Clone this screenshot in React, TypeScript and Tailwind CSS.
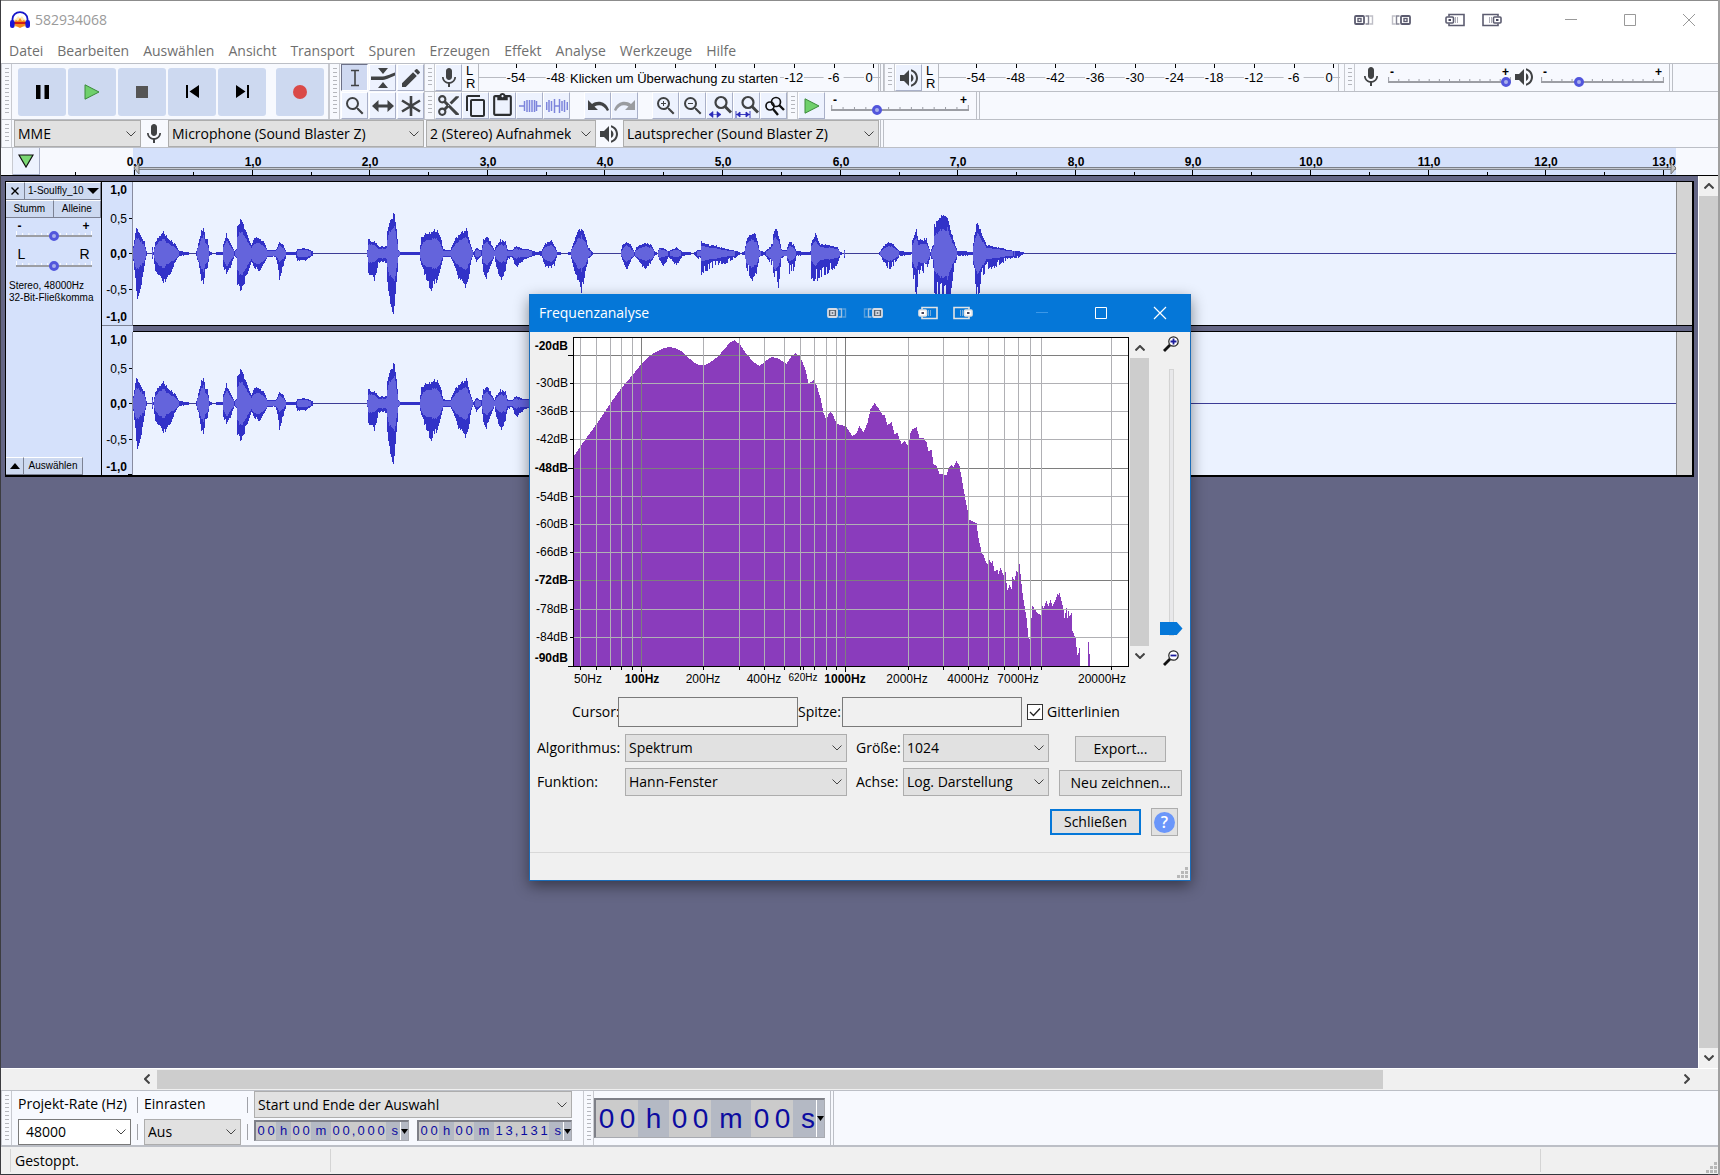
import React from 'react';
import { MdContentCopy, MdContentCut, MdContentPaste, MdEdit, MdMic, MdSearch, MdVolumeUp, MdZoomIn, MdZoomOut } from 'react-icons/md';

/* ---------- data ---------- */

const MENU = ['Datei', 'Bearbeiten', 'Auswählen', 'Ansicht', 'Transport', 'Spuren', 'Erzeugen', 'Effekt', 'Analyse', 'Werkzeuge', 'Hilfe'];

// x, peak above zero, peak below zero (px)
const ENVELOPE: number[][] = [
  [0, 8, 8], [3, 26, 40], [4, 24, 46], [8, 18, 32], [11, 12, 12], [13, 2, 2], [14, 0, 0], [18, 0, 0], [19, 6, 6], [20, 1, 1],
  [22, 12, 20], [27, 20, 25], [30, 22, 30], [34, 17, 25], [38, 13, 20], [42, 9, 8], [46, 2, 2], [55, 1, 1], [56, 0, 0], [62, 0, 0],
  [63, 2, 2], [66, 14, 14], [68, 24, 27], [70, 28, 35], [72, 16, 18], [74, 14, 14], [76, 2, 2], [79, 0, 0], [85, 1, 1], [89, 1, 1],
  [90, 10, 14], [93, 20, 21], [98, 9, 12], [101, 2, 2], [103, 4, 4], [104, 28, 35], [108, 36, 39], [113, 22, 24], [118, 8, 10],
  [121, 18, 14], [126, 16, 18], [131, 11, 11], [134, 3, 3], [142, 3, 3], [144, 6, 10], [146, 12, 27], [150, 8, 12], [153, 1, 1],
  [162, 1, 1], [164, 4, 7], [172, 5, 7], [179, 2, 2], [180, 0, 0], [233, 0, 0], [234, 3, 3], [235, 14, 20], [241, 13, 28], [245, 7, 10],
  [251, 7, 8], [253, 8, 9], [254, 22, 28], [256, 33, 50], [259, 40, 63], [261, 41, 60], [263, 25, 32], [265, 4, 4], [267, 1, 1], [286, 1, 1],
  [288, 16, 12], [294, 21, 30], [297, 23, 38], [304, 24, 27], [307, 17, 15], [310, 4, 3], [317, 3, 3], [321, 14, 12], [325, 18, 25],
  [328, 22, 30], [333, 26, 35], [335, 18, 27], [338, 6, 6], [340, 1, 1], [343, 5, 8], [348, 3, 2], [350, 14, 20], [353, 18, 25],
  [356, 14, 15], [361, 3, 3], [363, 8, 14], [367, 14, 27], [372, 12, 18], [374, 4, 6], [378, 3, 3], [383, 7, 14], [388, 5, 8],
  [395, 4, 4], [403, 1, 1], [408, 2, 2], [412, 10, 14], [418, 13, 14], [421, 8, 12], [424, 1, 1], [431, 0, 0], [437, 1, 1],
  [439, 8, 10], [444, 22, 28], [448, 27, 39], [452, 16, 20], [455, 6, 5], [459, 1, 1], [460, 0, 0], [487, 0, 0], [489, 8, 6],
  [493, 12, 17], [498, 8, 6], [501, 1, 2], [503, 6, 4], [512, 11, 17], [518, 9, 8], [521, 2, 2], [524, 0, 0], [526, 6, 6],
  [530, 5, 14], [535, 2, 3], [543, 6, 12], [549, 1, 2], [555, 1, 1], [560, 0, 0], [564, 3, 4], [567, 3, 6], [568, 12, 22],
  [574, 9, 18], [582, 8, 12], [594, 4, 10], [604, 2, 2], [608, 0, 0], [611, 2, 2], [613, 14, 14], [616, 20, 22], [619, 22, 27], [623, 18, 20],
  [626, 3, 3], [631, 1, 1], [636, 6, 8], [639, 10, 12], [640, 22, 20], [642, 27, 29], [645, 20, 37], [648, 4, 4], [653, 3, 3], [656, 12, 20],
  [660, 9, 18], [663, 2, 2], [675, 1, 1], [677, 2, 2], [678, 12, 26], [682, 20, 29], [687, 9, 27], [695, 9, 20], [704, 6, 12],
  [707, 1, 1], [710, 0, 0], [711, 4, 4], [712, 0, 0], [745, 0, 0], [750, 7, 8], [756, 12, 17], [761, 8, 11], [766, 2, 2],
  [778, 1, 1], [779, 14, 24], [783, 25, 46], [785, 14, 20], [793, 15, 18], [797, 1, 2], [800, 10, 14], [801, 30, 46], [809, 38, 58],
  [814, 40, 60], [817, 26, 46], [820, 14, 20], [824, 2, 2], [831, 2, 2], [839, 1, 1], [841, 20, 26], [844, 34, 57], [848, 22, 30],
  [853, 8, 16], [865, 6, 13], [875, 3, 5], [885, 2, 4], [890, 1, 0], [892, 0, 0],
];

// Spectrum outline inside the plot (556 x 330)
const SPECTRUM: number[][] = [
  [1, 118], [7, 109], [23, 87], [37, 66], [48, 51], [59, 38], [68, 27], [75, 20], [82, 15], [88, 12], [95, 10], [102, 11], [108, 14],
  [113, 19], [120, 25], [125, 28], [131, 28], [137, 25], [144, 20], [150, 13], [156, 6], [161, 3], [167, 8], [173, 17], [180, 25],
  [186, 29], [192, 24], [198, 20], [204, 21], [213, 27], [218, 19], [222, 16], [227, 20], [232, 33], [235, 46], [238, 45], [240, 43],
  [243, 48], [247, 61], [250, 76], [253, 83], [255, 77], [257, 74], [260, 79], [263, 87], [272, 89], [279, 99], [283, 96], [286, 89],
  [290, 95], [294, 86], [297, 72], [301, 66], [305, 71], [309, 78], [311, 78], [314, 88], [318, 85], [321, 97], [324, 96], [328, 107],
  [331, 104], [335, 109], [337, 96], [339, 92], [343, 90], [346, 101], [350, 101], [353, 105], [355, 114], [358, 113], [360, 127],
  [363, 129], [366, 137], [373, 138], [375, 131], [378, 128], [380, 130], [383, 124], [386, 129], [389, 146], [393, 168], [396, 183],
  [403, 186], [405, 201], [408, 215], [410, 218], [412, 224], [415, 229], [416, 223], [418, 226], [419, 224], [421, 234], [424, 233],
  [425, 237], [427, 231], [430, 238], [432, 235], [433, 246], [434, 253], [436, 248], [438, 252], [439, 240], [441, 243], [443, 234],
  [445, 236], [446, 227], [447, 237], [449, 256], [451, 269], [453, 281], [455, 301], [457, 303], [458, 281], [459, 269], [462, 273],
  [464, 276], [467, 278], [469, 269], [470, 271], [473, 264], [475, 269], [477, 263], [479, 269], [482, 263], [484, 257], [485, 258],
  [486, 256], [488, 264], [490, 272], [491, 281], [493, 271], [494, 281], [495, 274], [496, 279], [498, 276], [499, 294], [502, 301],
  [504, 318], [505, 316], [506, 311], [507, 329], [514, 329], [515, 305], [517, 329],
];

const DB_LABELS: [string, number, boolean][] = [
  ['-20dB', 14, true], ['-30dB', 51, false], ['-36dB', 79, false], ['-42dB', 107, false], ['-48dB', 136, true], ['-54dB', 165, false],
  ['-60dB', 192, false], ['-66dB', 220, false], ['-72dB', 248, true], ['-78dB', 277, false], ['-84dB', 305, false], ['-90dB', 326, true],
];
const DB_LINES = [18, 46, 74, 102, 131, 159, 187, 215, 243, 272, 300];
const HZ_LINES = [7, 23, 37, 48, 59, 68, 130, 166, 191, 211, 227, 241, 253, 263, 272, 335, 370, 395, 415, 431, 445, 457, 468, 538];
const HZ_LABELS: [string, number, boolean][] = [
  ['50Hz', 58, false], ['100Hz', 112, true], ['200Hz', 173, false], ['400Hz', 234, false], ['1000Hz', 315, true],
  ['2000Hz', 377, false], ['4000Hz', 438, false], ['7000Hz', 488, false], ['20000Hz', 572, false],
];

function lerp(points: number[][], x: number, k: number) {
  for (let i = 1; i < points.length; i++) {
    if (x <= points[i][0]) {
      const a = points[i - 1];
      const b = points[i];
      return a[k] + ((b[k] - a[k]) * (x - a[0])) / (b[0] - a[0] || 1);
    }
  }
  return 0;
}

function noise(n: number) {
  const v = Math.sin(n * 127.1) * 43758.5453;
  return v - Math.floor(v);
}

function buildWave() {
  let peak = '';
  let rms = '';
  for (let x = 0; x <= 892; x++) {
    const up = lerp(ENVELOPE, x, 1);
    const down = lerp(ENVELOPE, x, 2);
    if (up < 0.5) continue;
    // the louder bursts have a ragged lower edge
    const ragged = x > 560 && noise(x + 77) > 0.7 ? 0.6 : 1;
    const t = Math.round(up * (0.84 + 0.18 * noise(x)));
    const b = Math.round(down * (0.82 + 0.2 * noise(x + 500)) * ragged);
    const r = Math.round(Math.min(up, down) * (0.56 + 0.1 * noise(x + 900)));
    peak += `M${x + 0.5} ${71 - t}V${72 + b}`;
    if (r > 1) rms += `M${x + 0.5} ${71 - r}V${72 + r}`;
  }
  return { peak, rms };
}
const WAVE = buildWave();

const SPECTRUM_PATH = (() => {
  let d = 'M1 329';
  for (let x = 1; x < 518; x++) d += `V${Math.round(lerp(SPECTRUM, x, 1))}H${x + 1}`;
  return d + 'V329Z';
})();

/* ---------- small parts ---------- */

const Gripper = () => (
  <div className="flex w-[11px] shrink-0 items-center justify-center border-x border-[#c8cad0] self-stretch">
    <div className="my-1 w-1 self-stretch bg-[repeating-linear-gradient(to_bottom,#b4b6bc_0_1px,transparent_1px_4px)]" />
  </div>
);

const EndBar = () => <div className="w-1 shrink-0 self-stretch border-x border-[#bcbfc6]" />;

const Chevron = ({ className = '' }: { className?: string }) => (
  <svg viewBox="0 0 10 6" className={`h-[6px] w-[10px] ${className}`} fill="none" stroke="#444">
    <path d="M.5 .5 5 5 9.5 .5" />
  </svg>
);

type SelectProps = { label: string; value: string; className?: string; id?: string };
const Select = ({ label, value, className = '', id }: SelectProps) => (
  <div className={`relative flex shrink-0 items-center border border-[#adadad] bg-[#e1e1e1] ${className}`}>
    <select id={id} aria-label={label} className="h-full w-full appearance-none overflow-hidden bg-transparent pl-[3px] pr-6 leading-5 outline-none">
      <option>{value}</option>
    </select>
    <Chevron className="pointer-events-none absolute right-1" />
  </div>
);

type ToolProps = { label: string; children?: React.ReactNode; active?: boolean };
const Tool = ({ label, children, active }: ToolProps) => (
  <button
    aria-label={label}
    className={`flex h-[27px] w-[27px] shrink-0 items-center justify-center border text-[#404244] ${
      active ? 'border-t-[#6d7187] border-l-[#6d7187] border-r-white border-b-white bg-[#cfd9f1]' : 'border-t-white border-l-white border-r-[#a9b0c8] border-b-[#a9b0c8] bg-[#edf2fe]'
    }`}
  >
    {children}
  </button>
);

const TransportButton = ({ label, children, className = '' }: { label: string; children: React.ReactNode; className?: string }) => (
  <button aria-label={label} className={`flex h-12 w-12 items-center justify-center rounded-[3px] bg-[#cdd9f0] ${className}`}>
    {children}
  </button>
);

type SliderProps = { label: string; value: number; className: string; ends?: string[]; endClass?: string; tick?: string };
const Slider = ({ label, value, className, ends = ['-', '+'], endClass = 'text-xs leading-2 font-bold', tick = '#9a9ca4' }: SliderProps) => (
  <div className={`flex shrink-0 flex-col font-['Liberation_Sans',sans-serif] ${className}`}>
    <div className={`flex justify-between px-[2px] ${endClass}`}>
      <span>{ends[0]}</span>
      <span>{ends[1]}</span>
    </div>
    <div className="relative h-3">
      <svg className="absolute inset-x-0 top-[1px] h-[5px] w-full" preserveAspectRatio="none" viewBox="0 0 100 5">
        {Array.from({ length: 13 }, (_, i) => (
          <path key={i} d={`M${0.5 + i * 8.25} ${i % 12 ? 2 : 0}V5`} stroke={tick} vectorEffect="non-scaling-stroke" />
        ))}
      </svg>
      <input
        type="range"
        aria-label={label}
        defaultValue={value}
        className="absolute inset-0 m-0 h-3 w-full appearance-none bg-transparent [&::-webkit-slider-runnable-track]:h-[2px] [&::-webkit-slider-runnable-track]:bg-[#9c9ea4] [&::-webkit-slider-thumb]:-mt-1 [&::-webkit-slider-thumb]:h-[10px] [&::-webkit-slider-thumb]:w-[10px] [&::-webkit-slider-thumb]:appearance-none [&::-webkit-slider-thumb]:rounded-full [&::-webkit-slider-thumb]:border-[3px] [&::-webkit-slider-thumb]:border-[#5256dc] [&::-webkit-slider-thumb]:bg-[#a9b0ec]"
      />
    </div>
  </div>
);

// Multi-monitor helper glyphs that sit in the title bars
const MoveGlyph = ({ flip, tone, fill }: { flip?: boolean; tone: string; fill: string }) => (
  <svg viewBox="0 0 20 12" className={`h-3 w-5 ${flip ? '-scale-x-100' : ''}`} fill="none" stroke={tone}>
    <path d="M15.500 2h3v8h-3" opacity=".4" strokeWidth="1.400" />
    <path d="M11.500 2h3v8h-3" opacity=".75" strokeWidth="1.400" />
    <rect x="1" y="2" width="9" height="8" rx="1" strokeWidth="1.800" fill={fill} />
    <rect x="4" y="4.500" width="3" height="3" strokeWidth="1.400" />
  </svg>
);
const DockGlyph = ({ flip, tone, fill }: { flip?: boolean; tone: string; fill: string }) => (
  <svg viewBox="0 0 20 14" className={`h-[14px] w-5 ${flip ? '-scale-x-100' : ''}`} fill="none" stroke={tone}>
    <path d="M4 3.500V1.500h15v11H4v-2" strokeWidth="1.600" />
    <path d="M10.500 4v6M12.500 4v6" opacity=".5" />
    <rect x="1" y="4" width="7.500" height="6" rx="1" strokeWidth="1.600" fill={fill} />
    <path d="M3.500 7h2.500" strokeWidth="2" stroke="#44445c" />
  </svg>
);

const Triangle = ({ className = '' }: { className?: string }) => (
  <svg viewBox="0 0 16 16" className={className}>
    <path d="M1 .8 15 8 1 15.200z" fill="#6fd06c" stroke="#3c8a3c" />
  </svg>
);

const Meter = ({ start, hint }: { start: string; hint?: boolean }) => {
  const marks = ['-54', '-48', '-42', '-36', '-30', '-24', '-18', '-12', '-6', '0'];
  return (
    <button aria-label={start} className="flex h-[27px] shrink-0 text-left font-['Liberation_Sans',sans-serif]">
      <span className="flex w-3 flex-col text-[13px] leading-[13px]">
        <span>L</span>
        <span>R</span>
      </span>
      <svg width="402" height="27" className="text-[13px]">
        <path d="M.5 0V27M0 13.500H402M400.500 0V27" stroke="#b9bbc2" fill="none" />
        {marks.map((m, i) => {
          const x = 38 + i * 39.700;
          const hidden = hint && i > 1 && i < 7;
          return (
            <g key={m}>
              <path d={`M${Math.round(x) + 0.5} 0V4`} stroke="#000" />
              {!hidden && <rect x={i === 9 ? 386 : x - 10} y="6" width={i === 9 ? 9 : 20} height="14" fill="#f7f9fe" />}
              {!hidden && (
                <text x={i === 9 ? 391 : x} y="18" textAnchor="middle">
                  {m}
                </text>
              )}
            </g>
          );
        })}
        {hint && <rect x="90" y="5" width="212" height="18" fill="#f7f9fe" />}
        {hint && (
          <text x="92" y="19">
            Klicken um Überwachung zu starten
          </text>
        )}
      </svg>
    </button>
  );
};

/* ---------- window chrome ---------- */

const TitleBar = () => (
  <header className="bg-white text-[#9a9a9a]">
    <div className="h-px bg-[#8c8c8c]" />
    <div className="flex h-[37px] items-center pl-[9px] pr-[22px]">
      <svg viewBox="0 0 20 18" className="h-[18px] w-5">
        <path d="M4 16V9l3-2 1-2 2 2 2-2 2 3 2 1v7z" fill="#ffe9b0" />
        <path d="M4 11l2-2 2 1 2-3 2 3 2-1 2 2v3l-2 1-2 1-2 1-2-1-2-1-2-1z" fill="#f58a1e" />
        <path d="M4 12h12" stroke="#d01c1c" strokeWidth="2" />
        <path d="M2.500 11V8a7.500 6.800 0 0 1 15 0v3" fill="none" stroke="#1616c8" strokeWidth="1.800" />
        <rect x="0" y="9" width="4.600" height="8" rx="2.200" fill="#1616d8" />
        <rect x="15.400" y="9" width="4.600" height="8" rx="2.200" fill="#1616d8" />
      </svg>
      <span className="ml-[5px] text-sm">582934068</span>
      <div className="ml-auto flex items-center">
        <MoveGlyph tone="#5c5c70" fill="#fff" />
        <span className="w-[17px]" />
        <MoveGlyph flip tone="#5c5c70" fill="#fff" />
        <span className="w-[34px]" />
        <DockGlyph tone="#5c5c70" fill="#fff" />
        <span className="w-[17px]" />
        <DockGlyph flip tone="#5c5c70" fill="#fff" />
      </div>
      <div className="ml-[62px] flex items-center gap-[45px]">
        <button aria-label="Minimieren" className="h-[14px] w-[14px]">
          <svg viewBox="0 0 14 14" stroke="#999"><path d="M1 6.500h12" /></svg>
        </button>
        <button aria-label="Maximieren" className="h-[14px] w-[14px]">
          <svg viewBox="0 0 14 14" fill="none" stroke="#999"><path d="M1.500 1.500h11v11h-11z" /></svg>
        </button>
        <button aria-label="Schließen" className="h-[14px] w-[14px]">
          <svg viewBox="0 0 14 14" stroke="#999"><path d="M1 1l12 12M13 1L1 13" /></svg>
        </button>
      </div>
    </div>
    <nav className="flex h-[25px] items-center gap-[14px] pl-2 text-sm text-[#6f6f6f]">
      {MENU.map((item) => (
        <button key={item}>{item}</button>
      ))}
    </nav>
  </header>
);

const TransportBar = () => (
  <div className="flex items-center border-r border-[#c8cad0] pr-1">
    <Gripper />
    <div className="ml-[6px] flex gap-0.5">
      <TransportButton label="Pause">
        <svg viewBox="0 0 13 14" className="h-[14px] w-[13px]"><path d="M0 0h4.500v14H0zM8.500 0H13v14H8.500z" /></svg>
      </TransportButton>
      <TransportButton label="Wiedergabe"><Triangle className="h-4 w-4" /></TransportButton>
      <TransportButton label="Stopp"><span className="h-3 w-3 bg-[#555]" /></TransportButton>
      <TransportButton label="Anfang">
        <svg viewBox="0 0 13 13" className="h-[13px] w-[13px]"><path d="M0 0h2v13H0zM13 0v13L3.500 6.500z" /></svg>
      </TransportButton>
      <TransportButton label="Ende">
        <svg viewBox="0 0 13 13" className="h-[13px] w-[13px]"><path d="M11 0h2v13h-2zM0 0v13l9.500-6.500z" /></svg>
      </TransportButton>
      <TransportButton label="Aufnahme" className="ml-2"><span className="h-[14px] w-[14px] rounded-full bg-[#da4a48]" /></TransportButton>
    </div>
  </div>
);

const ToolsBar = () => (
  <div className="flex">
    <Gripper />
    <div className="ml-px grid grid-cols-3 gap-px">
      <Tool label="Auswahlwerkzeug" active>
        <svg viewBox="0 0 16 18" className="h-[18px] w-4" fill="none" stroke="#404244" strokeWidth="1.600"><path d="M4 1.500h8M4 16.500h8M8 1.500v15" /></svg>
      </Tool>
      <Tool label="Hüllkurvenwerkzeug">
        <svg viewBox="0 0 24 20" className="h-5 w-6 shrink-0" fill="#404244"><path d="M7 0h10l-5 6zM7 20h10l-5-6zM0 8.500h10c5 0 8-2 14-4v3c-6 2.500-9 4.500-14 4.500H0z" /></svg>
      </Tool>
      <Tool label="Zeichenwerkzeug"><MdEdit size={24} className="shrink-0" /></Tool>
      <Tool label="Zoomwerkzeug"><MdSearch size={24} className="shrink-0" /></Tool>
      <Tool label="Verschiebewerkzeug">
        <svg viewBox="0 0 22 14" className="h-[14px] w-[22px] shrink-0" fill="#404244"><path d="M0 7l6.500-6v4.600h9V1L22 7l-6.500 6V8.400h-9V13z" /></svg>
      </Tool>
      <Tool label="Multiwerkzeug">
        <svg viewBox="0 0 20 20" className="h-5 w-5" stroke="#404244" strokeWidth="2.600"><path d="M10 0v20M1 4.500l18 11M19 4.500l-18 11" /></svg>
      </Tool>
    </div>
  </div>
);

const Lens = ({ children }: { children?: React.ReactNode }) => (
  <svg viewBox="0 0 24 24" className="h-6 w-6 shrink-0" fill="none" stroke="#404244" strokeWidth="2.200">
    <circle cx="13" cy="8.500" r="5.500" />
    <path d="M17 12.500l6 6" strokeWidth="3" />
    {children}
  </svg>
);

const EditBar = () => (
  <div className="flex h-[27px]">
    <Gripper />
    <Tool label="Ausschneiden"><MdContentCut size={25} className="shrink-0" /></Tool>
    <Tool label="Kopieren"><MdContentCopy size={24} className="shrink-0 text-[#2c2e30]" /></Tool>
    <Tool label="Einfügen"><MdContentPaste size={25} className="shrink-0 text-[#2c2e30]" /></Tool>
    <Tool label="Trimmen">
      <svg viewBox="0 0 22 16" className="h-4 w-[22px] shrink-0" fill="none" stroke="#7c84dc"><path d="M0 8h5M17 8h5" strokeWidth="1.500" /><path d="M5.500 3v10M8 2v12M10.500 2v12M13 2v12M15.500 2v12M17.500 3v10" strokeWidth="1.500" /></svg>
    </Tool>
    <Tool label="Stille">
      <svg viewBox="0 0 22 16" className="h-4 w-[22px] shrink-0" fill="none" stroke="#7c84dc" strokeWidth="1.500"><path d="M.7 4v8M3 2v12M5.500 3v10M8.500 1v14M8.500 8h5M13.500 1v14M16 3v10M18.500 2v12M21.300 4v8" /></svg>
    </Tool>
    <div className="w-[14px]" />
    <Tool label="Rückgängig">
      <svg viewBox="0 0 22 14" className="h-[14px] w-[22px] shrink-0"><path d="M1 1v10h10L7.500 7.500C12 5 17 6 20 12l2-1C19 2 10 1 5 5z" fill="#404244" /></svg>
    </Tool>
    <Tool label="Wiederherstellen">
      <svg viewBox="0 0 22 14" className="h-[14px] w-[22px] shrink-0 -scale-x-100"><path d="M1 1v10h10L7.500 7.500C12 5 17 6 20 12l2-1C19 2 10 1 5 5z" fill="#9a9ca0" /></svg>
    </Tool>
    <div className="w-[14px]" />
    <Tool label="Vergrößern"><MdZoomIn size={24} className="shrink-0" /></Tool>
    <Tool label="Verkleinern"><MdZoomOut size={24} className="shrink-0" /></Tool>
    <Tool label="Auswahl einpassen">
      <Lens><path d="M1 20.500h12M5 17.500l-4 3 4 3zM9 17.500l4 3-4 3z" stroke="#2a2ab8" strokeWidth=".6" fill="#2a2ab8" /></Lens>
    </Tool>
    <Tool label="Projekt einpassen">
      <Lens><path d="M1 17v7M15 17v7M1 20.500h14M5 18l-3 2.500 3 2.500zM11 18l3 2.500-3 2.500z" stroke="#2a2ab8" strokeWidth=".9" fill="#2a2ab8" /></Lens>
    </Tool>
    <Tool label="Zoom umschalten">
      <svg viewBox="0 0 24 24" className="h-6 w-6 shrink-0" fill="none" stroke="#111" strokeWidth="1.700"><circle cx="14" cy="8" r="4.500" /><circle cx="8" cy="12" r="4" /><path d="M17 11l5 5M11 15l5 6" strokeWidth="2.400" /></svg>
    </Tool>
    <Gripper />
    <Tool label="Wiedergabe mit Geschwindigkeit"><Triangle className="h-4 w-4" /></Tool>
    <Slider label="Geschwindigkeit" value={32} className="ml-[6px] mt-[4px] w-[138px]" />
    <div className="w-[7px]" />
    <EndBar />
  </div>
);

const MeterBar = () => (
  <div className="flex h-[27px]">
    <Gripper />
    <Tool label="Aufnahmepegel"><MdMic size={24} className="shrink-0" /></Tool>
    <div className="w-1" />
    <Meter start="Überwachung starten" hint />
    <EndBar />
    <Gripper />
    <Tool label="Wiedergabepegel"><MdVolumeUp size={24} className="shrink-0" /></Tool>
    <div className="w-1" />
    <Meter start="Wiedergabepegel anzeigen" />
    <div className="w-1" />
    <Gripper />
    <MdMic size={24} className="mt-px ml-1 shrink-0 text-[#404244]" />
    <Slider label="Aufnahmelautstärke" value={100} className="ml-[5px] mt-[4px] w-[123px]" />
    <MdVolumeUp size={24} className="ml-px mt-px shrink-0 text-[#404244]" />
    <Slider label="Wiedergabelautstärke" value={29} className="ml-[5px] mt-[4px] w-[123px]" />
    <div className="w-[5px]" />
    <EndBar />
  </div>
);

const DeviceBar = () => (
  <div className="flex h-7 items-center border-b border-[#bcbfc6] text-sm">
    <Gripper />
    <Select label="Audio-Host" value="MME" className="ml-[2px] h-[27px] w-[127px]" />
    <MdMic size={24} className="mx-px shrink-0 text-[#404244]" />
    <Select label="Aufnahmegerät" value="Microphone (Sound Blaster Z)" className="ml-px h-[27px] w-[256px]" />
    <Select label="Aufnahmekanäle" value="2 (Stereo) Aufnahmekanäle" className="ml-[2px] h-[27px] w-[170px]" />
    <MdVolumeUp size={24} className="mx-px shrink-0 text-[#404244]" />
    <Select label="Wiedergabegerät" value="Lautsprecher (Sound Blaster Z)" className="mx-px h-[27px] w-[256px]" />
    <EndBar />
  </div>
);

const Ruler = () => (
  <div className="flex h-7 border-b border-black bg-[#f7f9fe]">
    <div className="w-[12px] border-r border-[#c8cad0]" />
    <button aria-label="Abspielbereich anheften" className="flex w-[27px] items-center justify-center border-r border-b border-[#a9b0c8] bg-[#edf2fe]">
      <svg viewBox="0 0 16 14" className="h-[14px] w-4"><path d="M1 1h14L8 13z" fill="#7ad873" stroke="#111" strokeWidth="1.200" /></svg>
    </button>
    <svg height="27" className="min-w-0 flex-1 font-['Liberation_Sans',sans-serif] text-xs font-bold">
      <rect x="93" width="1543" height="27" fill="#d5e1fb" />
      <path d="M94 19.500H1636M94 21.500H1636" stroke="#7c8088" />
      <path d="M94 20.500H1636" stroke="#c4c8d0" />
      <path d="M35.500 24v3" stroke="#000" />
      {Array.from({ length: 14 }, (_, i) => {
        const x = Math.round(94 + i * 117.600);
        return (
          <g key={i}>
            <path d={`M${x + 0.5} 22v5${i < 13 ? `M${x + 59.500} 24v3` : ''}`} stroke="#000" />
            <text x={x + 1} y="18" textAnchor="middle">{i},0</text>
          </g>
        );
      })}
      <path d="M99 15l-5 5 5 6zM1631 15l5 5-5 6z" fill="#c0c0c0" stroke="#777" />
    </svg>
  </div>
);

/* ---------- track ---------- */

const Channel = ({ floor }: { floor?: boolean }) => (
  <div className="flex h-[143px]">
    <svg width="31" height="143" className="shrink-0 bg-[#d5e1fb] font-['Liberation_Sans',sans-serif] text-xs">
      <text x="25" y="12" textAnchor="end" className="font-bold">1,0</text>
      <text x="25" y="41" textAnchor="end">0,5</text>
      <text x="25" y="76" textAnchor="end" className="font-bold">0,0</text>
      <text x="25" y="112" textAnchor="end">-0,5</text>
      <text x="25" y="139" textAnchor="end" className="font-bold">-1,0</text>
      <path d={`M27 36.500h4M27 71.500h4M27 107.500h4${floor ? 'M26 142.500h5' : ''}`} stroke="#000" />
      <path d="M30.500 0v143" stroke="#888ca0" />
    </svg>
    <svg height="143" className="min-w-0 flex-1 bg-[#ebf2ff]">
      <path d="M0 71.500H1900" stroke="#3c3c96" />
      <path d={WAVE.peak} stroke="#3232c8" />
      <path d={WAVE.rms} stroke="#6464dc" />
    </svg>
    <div className="w-4 border-l border-[#8c8c8c] bg-[#d4d4d4]" />
  </div>
);

const panelButton = 'border-r border-b border-[#7c8294] bg-[#cdd9f0] border-t border-t-white text-center';

const TrackPanel = () => (
  <div className="flex w-[96px] shrink-0 flex-col border-r border-black bg-[#d5e1fb] font-['Liberation_Sans',sans-serif] text-[10px] leading-4">
    <div className="flex h-[18px]">
      <button aria-label="Spur schließen" className={`flex w-[19px] items-center justify-center ${panelButton}`}>
        <svg viewBox="0 0 8 8" className="h-2 w-2" stroke="#000" strokeWidth="1.400"><path d="M.5 .5l7 7M7.500 .5l-7 7" /></svg>
      </button>
      <button className={`flex flex-1 items-center justify-between pl-[3px] pr-px ${panelButton}`}>
        1-Soulfly_10
        <svg viewBox="0 0 12 6" className="h-[6px] w-3"><path d="M0 0h12L6 6z" /></svg>
      </button>
    </div>
    <div className="flex h-[18px]">
      <button className={`flex-1 ${panelButton}`}>Stumm</button>
      <button className={`flex-1 ${panelButton}`}>Alleine</button>
    </div>
    <Slider label="Lautstärke" value={50} tick="#fff" className="mx-auto mt-1 w-[76px]" />
    <Slider label="Balance" value={50} tick="#fff" ends={['L', 'R']} endClass="text-[14px] leading-3" className="mx-auto mt-1.5 w-[76px]" />
    <p className="mt-2 pl-[3px] leading-3 whitespace-nowrap">
      Stereo, 48000Hz
      <br />
      32-Bit-Fließkomma
    </p>
    <div className="mt-auto flex h-[18px]">
      <button aria-label="Spur einklappen" className={`flex w-[18px] items-center justify-center ${panelButton}`}>
        <svg viewBox="0 0 10 6" className="h-[6px] w-[10px]"><path d="M0 6h10L5 0z" /></svg>
      </button>
      <button className={`w-[59px] whitespace-nowrap ${panelButton}`}>Auswählen</button>
    </div>
  </div>
);

const TrackArea = () => (
  <main className="flex min-h-0 flex-1 bg-[#646685]">
    <div className="min-w-0 flex-1 px-1 pt-[5px]">
      <div className="flex border-t border-r-2 border-b-2 border-l border-black">
        <TrackPanel />
        <div className="min-w-0 flex-1">
          <Channel />
          <div className="flex h-[7px]">
            <div className="w-[31px] border-t border-[#7c8294] bg-[#d5e1fb]" />
            <div className="flex-1 border-y border-black" />
          </div>
          <Channel floor />
        </div>
      </div>
    </div>
    <div className="flex w-5 flex-col items-center border-l border-white bg-[#f0f0f0]">
      <Chevron className="my-[7px] rotate-180 stroke-2" />
      <div className="w-full flex-1 bg-[#cdcdcd]" />
      <Chevron className="my-[7px] stroke-2" />
    </div>
  </main>
);

/* ---------- bottom ---------- */

type Cell = [string, string];
const TimeControl = ({ label, cells, className }: { label: string; cells: Cell[]; className: string }) => (
  <div
    role="group"
    aria-label={label}
    className={`flex items-stretch border-t-2 border-l-2 border-[#7e8088] border-r border-b border-r-[#a8aab0] border-b-[#a8aab0] bg-[#b4b9c4] font-['Liberation_Sans',sans-serif] text-[#0c0ca0] ${className}`}
  >
    {cells.map(([ch, width], i) => (
      <span key={i} className={`flex shrink-0 items-center ${ch === 's' ? 'justify-end' : 'justify-center'} ${width} ${/[0-9,]/.test(ch) ? 'bg-[#cbcbcb]' : ''}`}>
        {ch}
      </span>
    ))}
    <button aria-label="Format wählen" className="ml-auto flex w-2 items-center justify-center border-l border-white text-black">
      <svg viewBox="0 0 7 5" className="h-[5px] w-[7px]"><path d="M0 0h7L3.500 5z" /></svg>
    </button>
  </div>
);

const small = (text: string): Cell[] =>
  text.split('').map((ch) => [ch, ch === 'h' ? 'w-[15px]' : ch === 'm' ? 'w-5' : ch === ',' ? 'w-[5px]' : ch === 's' ? 'w-3' : 'w-[10px]']);
const big = (text: string): Cell[] =>
  text.split('').map((ch) => [ch, ch === 'h' ? 'w-[31px]' : ch === 'm' ? 'w-10' : ch === 's' ? 'w-[22px]' : 'w-[21px]']);

const Dividers = () => (
  <div className="mx-[6px] flex flex-col justify-around">
    <span className="h-4 w-px bg-[#a0a2a8]" />
    <span className="h-4 w-px bg-[#a0a2a8]" />
  </div>
);

const BottomBar = () => (
  <div className="flex h-[57px] border-t border-b-2 border-[#bcbfc6] bg-[#f7f9fe] text-sm">
    <Gripper />
    <div className="ml-[6px] flex w-[113px] flex-col justify-between">
      <label htmlFor="rate" className="leading-[26px] whitespace-nowrap">Projekt-Rate (Hz)</label>
      <Select id="rate" label="Projekt-Rate" value="48000" className="h-[26px] border-[#7a7a7a]! bg-white! pl-1" />
    </div>
    <Dividers />
    <div className="flex w-[97px] flex-col justify-between">
      <label htmlFor="snap" className="leading-[26px]">Einrasten</label>
      <Select id="snap" label="Einrasten" value="Aus" className="h-[26px]" />
    </div>
    <Dividers />
    <div className="w-[318px]">
      <Select label="Auswahlmodus" value="Start und Ende der Auswahl" className="h-[27px]" />
      <div className="mt-[2px] flex justify-between text-[13px]">
        <TimeControl label="Start" cells={small('00h00m00,000s')} className="h-[21px] w-[155px]" />
        <TimeControl label="Ende" cells={small('00h00m13,131s')} className="h-[21px] w-[155px]" />
      </div>
    </div>
    <div className="w-[11px]" />
    <Gripper />
    <TimeControl label="Position" cells={big('00h00m00s')} className="mt-[7px] h-10 w-[231px] text-[28px]" />
    <div className="w-[5px]" />
    <EndBar />
  </div>
);

const SizeGrip = () => (
  <svg viewBox="0 0 11 11" className="h-[11px] w-[11px]" fill="#b8b8b8">
    <path d="M8 0h3v3H8zM4 4h3v3H4zM8 4h3v3H8zM0 8h3v3H0zM4 8h3v3H4zM8 8h3v3H8z" />
  </svg>
);

const StatusBar = () => (
  <footer className="flex h-7 border-b border-[#33363c] bg-[#f0f0f0] text-sm">
    <div className="my-0.5 w-[10px] border-r border-[#d4d4d4]" />
    <div className="my-0.5 w-[320px] border-r border-[#d4d4d4] pl-1 leading-6">Gestoppt.</div>
    <div className="my-0.5 flex-1 border-r border-[#d4d4d4]" />
    <div className="flex w-[177px] items-end justify-end p-px"><SizeGrip /></div>
  </footer>
);

const HScroll = () => (
  <div className="flex h-[22px] items-center border-t border-white bg-[#f0f0f0] pb-px">
    <div className="flex w-[156px] justify-end pr-[5px]"><Chevron className="rotate-90 stroke-2" /></div>
    <div className="mr-[299px] h-[19px] flex-1 bg-[#cdcdcd]" />
    <div className="w-9"><Chevron className="-rotate-90 stroke-2" /></div>
  </div>
);

/* ---------- frequency analysis dialog ---------- */

const SpectrumChart = () => (
  <svg width="599" height="365" className="shrink-0 font-['Liberation_Sans',sans-serif] text-xs">
    {DB_LABELS.map(([t, y, bold]) => (
      <text key={t} x="38" y={y + 4} textAnchor="end" className={bold ? 'font-bold' : ''}>{t}</text>
    ))}
    {HZ_LABELS.map(([t, x, bold]) => (
      <text key={t} x={x} y="351" textAnchor="middle" className={bold ? 'font-bold' : ''}>{t}</text>
    ))}
    <text x="273" y="349" textAnchor="middle" className="text-[10px]">620Hz</text>
    <g transform="translate(43 5)">
      <rect x=".5" y=".5" width="555" height="329" fill="#fff" />
      <path d={SPECTRUM_PATH} fill="#8a3cbc" />
      {DB_LINES.map((y) => (
        <path key={y} d={`M1 ${y + 0.5}H555`} stroke={[18, 131, 243].includes(y) ? '#7e7e7e' : '#b0b0b4'} />
      ))}
      {HZ_LINES.map((x) => (
        <path key={x} d={`M${x + 0.5} 1V329`} stroke={[68, 272].includes(x) ? '#7e7e7e' : '#b0b0b4'} />
      ))}
      {DB_LINES.map((y) => <path key={y} d={`M${[18, 131, 243].includes(y) ? -5 : -3} ${y + 0.5}H0`} stroke="#000" />)}
      {[...HZ_LINES, 230].map((x) => <path key={x} d={`M${x + 0.5} 330v${[68, 272].includes(x) ? 5 : 3}`} stroke="#000" />)}
      <path d="M-5 329.500H0" stroke="#000" />
      <rect x=".5" y=".5" width="555" height="329" fill="none" stroke="#000" />
    </g>
  </svg>
);

const ZoomGlyph = ({ plus }: { plus?: boolean }) => (
  <svg viewBox="0 0 16 16" className="h-4 w-4" fill="none">
    <path d="M1 15l6-6" stroke="#111" strokeWidth="2.800" />
    <circle cx="10.500" cy="5.500" r="4.700" fill="#fff" stroke="#222" strokeWidth="1.200" />
    <path d={plus ? 'M7.500 5.500h6M10.500 2.500v6' : 'M7.500 5.500h6'} stroke="#1c1c9c" strokeWidth="1.800" />
  </svg>
);

const FrequencyDialog = () => (
  <section role="dialog" aria-label="Frequenzanalyse" className="absolute top-[294px] left-[528px] w-[662px] border border-t-0 border-[#1a6cb8] bg-[#f0f0f0] text-sm shadow-[0_5px_14px_rgba(0,0,0,0.45)]">
    <div className="flex h-[38px] items-center bg-[#0577d8] pr-[23px] pl-[9px] text-white">
      <h2>Frequenzanalyse</h2>
      <div className="ml-auto flex items-center">
        <MoveGlyph tone="#d8dce4" fill="#55606c" />
        <span className="w-4" />
        <MoveGlyph flip tone="#d8dce4" fill="#55606c" />
        <span className="w-[35px]" />
        <DockGlyph tone="#e4e4e4" fill="#fff" />
        <span className="w-[15px]" />
        <DockGlyph flip tone="#e4e4e4" fill="#fff" />
      </div>
      <div className="ml-[62px] flex items-center gap-[45px]">
        <button aria-label="Minimieren" disabled className="h-[14px] w-[14px]">
          <svg viewBox="0 0 14 14" stroke="#3c98e8"><path d="M1 6.500h12" /></svg>
        </button>
        <button aria-label="Maximieren" className="h-[14px] w-[14px]">
          <svg viewBox="0 0 14 14" fill="none" stroke="#fff"><path d="M1.500 1.500h11v11h-11z" /></svg>
        </button>
        <button aria-label="Dialog schließen" className="h-[14px] w-[14px]">
          <svg viewBox="0 0 14 14" stroke="#fff" strokeWidth="1.200"><path d="M1 1l12 12M13 1L1 13" /></svg>
        </button>
      </div>
    </div>

    <div className="flex">
      <SpectrumChart />
      <div className="mt-[6px] ml-px flex h-[328px] w-[19px] shrink-0 flex-col items-center">
        <Chevron className="my-[7px] rotate-180 stroke-2" />
        <div className="w-full flex-1 bg-[#cdcdcd]" />
        <Chevron className="my-[7px] stroke-2" />
      </div>
      <div className="flex flex-1 flex-col items-center pt-1 pl-[3px]">
        <ZoomGlyph plus />
        <input
          type="range"
          aria-label="Vertikaler Zoom"
          defaultValue={0}
          className="mt-[17px] mb-[14px] h-[267px] w-[23px] appearance-none bg-transparent [direction:rtl] [writing-mode:vertical-lr] [&::-webkit-slider-runnable-track]:w-[5px] [&::-webkit-slider-runnable-track]:border [&::-webkit-slider-runnable-track]:border-[#d4d4d4] [&::-webkit-slider-runnable-track]:bg-[#e8e8ea] [&::-webkit-slider-thumb]:-ml-[10px] [&::-webkit-slider-thumb]:h-[13px] [&::-webkit-slider-thumb]:w-[23px] [&::-webkit-slider-thumb]:appearance-none [&::-webkit-slider-thumb]:bg-[#0577d8] [&::-webkit-slider-thumb]:[clip-path:polygon(0_0,75%_0,100%_50%,75%_100%,0_100%)]"
        />
        <ZoomGlyph />
      </div>
    </div>

    <div className="flex h-[30px] items-center pl-[42px]">
      <label htmlFor="cursor" className="w-[46px] whitespace-nowrap">Cursor:</label>
      <input id="cursor" readOnly className="h-full w-[180px] border border-[#7a7a7a] bg-transparent" />
      <label htmlFor="peak" className="w-[44px] whitespace-nowrap">Spitze:</label>
      <input id="peak" readOnly className="h-full w-[180px] border border-[#7a7a7a] bg-transparent" />
      <label className="ml-[5px] flex items-center gap-1">
        <span className="relative flex h-4 w-4">
          <input type="checkbox" defaultChecked className="h-4 w-4 appearance-none border border-[#333] bg-white" />
          <svg viewBox="0 0 16 16" className="pointer-events-none absolute inset-0" fill="none" stroke="#222" strokeWidth="1.300"><path d="M3 8l3.500 3.500L13 4.500" /></svg>
        </span>
        Gitterlinien
      </label>
    </div>

    <div className="mt-[7px] grid grid-cols-[88px_222px_56px_146px_143px] items-center gap-y-[6px] pl-[7px]">
      <label htmlFor="algo">Algorithmus:</label>
      <Select id="algo" label="Algorithmus" value="Spektrum" className="h-7" />
      <label htmlFor="size" className="pl-[9px]">Größe:</label>
      <Select id="size" label="Größe" value="1024" className="h-7" />
      <button className="mt-0.5 h-[26px] w-[91px] justify-self-center border border-[#adadad] bg-[#e1e1e1]">Export...</button>
      <label htmlFor="func">Funktion:</label>
      <Select id="func" label="Funktion" value="Hann-Fenster" className="h-7" />
      <label htmlFor="axis" className="pl-[9px]">Achse:</label>
      <Select id="axis" label="Achse" value="Log. Darstellung" className="h-7" />
      <button className="mt-0.5 h-[26px] w-[123px] justify-self-center border border-[#adadad] bg-[#e1e1e1]">Neu zeichnen...</button>
    </div>

    <div className="mt-3 flex items-center justify-end gap-[10px] pr-3">
      <button className="h-[26px] w-[91px] border-2 border-[#0577d8] bg-[#e1e1e1]">Schließen</button>
      <button aria-label="Hilfe" className="flex h-7 w-[27px] items-center justify-center border border-[#adadad] bg-[#e1e1e1]">
        <span className="flex h-[21px] w-[21px] items-center justify-center rounded-full bg-[#6a96fa] text-base font-semibold text-white">?</span>
      </button>
    </div>
    <div className="mt-4 flex h-7 items-end justify-end border-t border-[#d8d8d8] p-0.5"><SizeGrip /></div>
  </section>
);

export default function App() {
  return (
    <div className="relative flex h-screen min-h-[900px] flex-col overflow-hidden border-r-2 border-l border-r-[#a0a0a0] border-l-[#3c3c40] bg-[#f7f9fe] font-['Open_Sans','Noto_Sans',sans-serif] text-black">
      <TitleBar />
      <div className="flex border-y border-[#bcbfc6]">
        <TransportBar />
        <ToolsBar />
        <div className="min-w-0 flex-1 overflow-hidden">
          <MeterBar />
          <div className="h-px bg-[#bcbfc6]" />
          <EditBar />
        </div>
      </div>
      <DeviceBar />
      <Ruler />
      <TrackArea />
      <HScroll />
      <BottomBar />
      <StatusBar />
      <FrequencyDialog />
    </div>
  );
}
